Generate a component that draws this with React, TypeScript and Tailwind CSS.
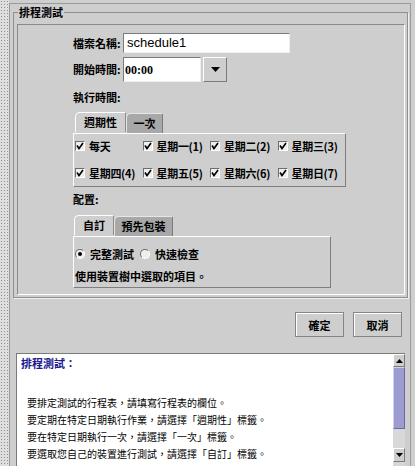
import React from "react";

const cjk = "font-['Noto_Sans_CJK_TC','Noto_Sans_CJK_SC',sans-serif]";

const Check = ({ label }: { label: string }) => (
  <div className="flex items-center gap-[4px] w-[68px] h-[16px]">
    <span className="w-[10px] h-[10px] flex items-center justify-center bg-[#eeeeee] border border-t-[#6e6e6e] border-l-[#6e6e6e] border-b-white border-r-white">
      <svg width="8" height="8" viewBox="0 0 8 8">
        <path d="M1 3.5 L3 6.5 L7 1" stroke="black" strokeWidth="1.6" fill="none" />
      </svg>
    </span>
    <span className="whitespace-nowrap tracking-[-0.3px]">{label}</span>
  </div>
);

const Radio = ({ label, on }: { label: string; on?: boolean }) => (
  <div className="flex items-center gap-[5px] h-[16px]">
    <span className="w-[10px] h-[10px] rounded-full flex items-center justify-center bg-[#eeeeee] border border-t-[#6e6e6e] border-l-[#6e6e6e] border-b-white border-r-white">
      {on && <span className="w-[4px] h-[4px] rounded-full bg-black" />}
    </span>
    <span className="whitespace-nowrap">{label}</span>
  </div>
);

const Tab = ({ label, active, w }: { label: string; active?: boolean; w: string }) => (
  <div
    className={
      "h-[20px] flex items-center justify-center rounded-tl-[5px] rounded-tr-[2px] border-t border-l border-r " +
      w +
      (active
        ? " relative z-10 -mb-px bg-[#cecece] border-t-white border-l-white border-r-[#8a8a8a]"
        : " mt-[1px] h-[19px] bg-[#a8a8a8] border-t-[#e6e6e6] border-l-[#e6e6e6] border-r-[#7a7a7a]")
    }
  >
    {label}
  </div>
);

const Panel = ({ w, children, className }: { w: string; children: React.ReactNode; className: string }) => (
  <div className={"border border-t-white border-l-white border-b-[#7f7f7f] border-r-[#7f7f7f] " + w + " " + className}>
    {children}
  </div>
);

const Button = ({ label }: { label: string }) => (
  <div className="w-[49px] h-[25px] flex items-center justify-center border border-[#858585] shadow-[inset_1px_1px_0_#ffffff] text-[11px] font-bold">
    {label}
  </div>
);

const helpLines = [
  "要排定測試的行程表，請填寫行程表的欄位。",
  "要定期在特定日期執行作業，請選擇「週期性」標籤。",
  "要在特定日期執行一次，請選擇「一次」標籤。",
  "要選取您自己的裝置進行測試，請選擇「自訂」標籤。",
];

export default function App() {
  return (
    <div className={"w-[415px] h-[466px] flex overflow-hidden bg-[#cecece] text-black " + cjk}>
      <div className="w-[9px] h-full bg-[#dedede] bg-[radial-gradient(circle,#8f8f8f_0.7px,transparent_0.9px)] bg-[length:3px_3px]" />
      <div className="w-[402px] mt-[3px] flex flex-col border-l border-t border-r border-l-[#9a9a9a] border-t-[#9a9a9a] border-r-[#9a9a9a]">
        {/* group box */}
        <div className="relative ml-[3px] mr-[2px] mt-[8px] h-[287px] border border-[#8f8f8f] shadow-[1px_1px_0_#f0f0f0]">
          <span className="absolute -top-[9px] left-[4px] px-[1px] bg-[#cecece] text-[11px] font-bold leading-[16px]">
            排程測試
          </span>
          <div className="ml-[3px] mr-[2px] mt-[11px] h-[271px] border border-t-[#8a8a8a] border-l-[#8a8a8a] border-b-white border-r-white">
            <div className="pl-[55px] pt-[8px] text-[11px] font-bold">
              <div className="flex items-center h-[20px]">
                <span className="w-[50px] whitespace-nowrap">檔案名稱:</span>
                <div className="w-[167px] h-[20px] bg-white border border-t-[#7a7a7a] border-l-[#7a7a7a] border-b-[#eeeeee] border-r-[#eeeeee] flex items-center pl-[3px] font-normal text-[13px] font-['Liberation_Sans',sans-serif]">
                  schedule1
                </div>
              </div>
              <div className="flex items-center h-[25px] mt-[4px]">
                <span className="w-[50px] whitespace-nowrap">開始時間:</span>
                <div className="w-[78px] h-[25px] bg-white border border-t-[#7a7a7a] border-l-[#7a7a7a] border-b-[#eeeeee] border-r-[#eeeeee] flex items-center pl-[1px] font-['Liberation_Serif',serif] text-[12px] font-bold">
                  00:00
                </div>
                <div className="ml-[2px] w-[24px] h-[25px] flex items-center justify-center border border-t-white border-l-white border-b-[#7a7a7a] border-r-[#7a7a7a]">
                  <svg width="9" height="5" viewBox="0 0 9 5">
                    <path d="M0 0 H9 L4.5 5 Z" fill="black" />
                  </svg>
                </div>
              </div>
              <div className="mt-[8px] h-[15px] flex items-center">執行時間:</div>

              <div className="mt-[7px] flex pl-[2px]">
                <Tab label="週期性" active w="w-[51px]" />
                <Tab label="一次" w="w-[37px]" />
              </div>
              <Panel w="w-[273px]" className="h-[54px] pt-[4px] pl-[1px]">
                <div className="flex">
                  <Check label="每天" />
                  <Check label="星期一(1)" />
                  <Check label="星期二(2)" />
                  <Check label="星期三(3)" />
                </div>
                <div className="flex mt-[11px]">
                  <Check label="星期四(4)" />
                  <Check label="星期五(5)" />
                  <Check label="星期六(6)" />
                  <Check label="星期日(7)" />
                </div>
              </Panel>

              <div className="mt-[5px] h-[15px] flex items-center">配置:</div>

              <div className="mt-[8px] flex pl-[1px]">
                <Tab label="自訂" active w="w-[40px]" />
                <Tab label="預先包裝" w="w-[59px]" />
              </div>
              <Panel w="w-[258px]" className="h-[52px] pt-[9px] pl-[1px]">
                <div className="flex gap-[6px]">
                  <Radio label="完整測試" on />
                  <Radio label="快速檢查" />
                </div>
                <div className="mt-[6px] h-[16px] flex items-center">使用裝置樹中選取的項目。</div>
              </Panel>
            </div>
          </div>
        </div>

        {/* buttons */}
        <div className="mt-[14px] flex justify-end gap-[9px] pr-[8px]">
          <Button label="確定" />
          <Button label="取消" />
        </div>

        {/* help */}
        <div className="mt-[16px] ml-[6px] mr-[5px] h-[113px] flex border-t border-l border-t-[#7a7a7a] border-l-[#7a7a7a] bg-white">
          <div className="flex-1 overflow-hidden">
            <div className="pl-[4px] pt-[1px] h-[17px] flex items-center text-[11px] font-bold text-[#1a1a8c]">
              排程測試：
            </div>
            <div className="mt-[23px] pl-[10px] text-[10px] leading-[17px]">
              {helpLines.map((l) => (
                <div key={l} className="whitespace-nowrap">
                  {l}
                </div>
              ))}
            </div>
          </div>
          <div className="w-[12px] flex flex-col bg-[#d6d6d6]">
            <div className="h-[13px] flex items-center justify-center border border-t-white border-l-white border-b-[#7a7a7a] border-r-[#7a7a7a] bg-[#cecece]">
              <svg width="7" height="4" viewBox="0 0 7 4">
                <path d="M0 4 H7 L3.5 0 Z" fill="black" />
              </svg>
            </div>
            <div className="h-[62px] bg-[#9c9cd0] border border-t-[#d0d0f0] border-l-[#d0d0f0] border-b-[#6a6aa0] border-r-[#6a6aa0]" />
            <div className="h-[19px] bg-[#d8d8d8]" />
            <div className="h-[14px] flex items-center justify-center border border-t-white border-l-white border-b-[#7a7a7a] border-r-[#7a7a7a] bg-[#cecece]">
              <svg width="7" height="4" viewBox="0 0 7 4">
                <path d="M0 0 H7 L3.5 4 Z" fill="black" />
              </svg>
            </div>
          </div>
        </div>
      </div>
    </div>
  );
}
